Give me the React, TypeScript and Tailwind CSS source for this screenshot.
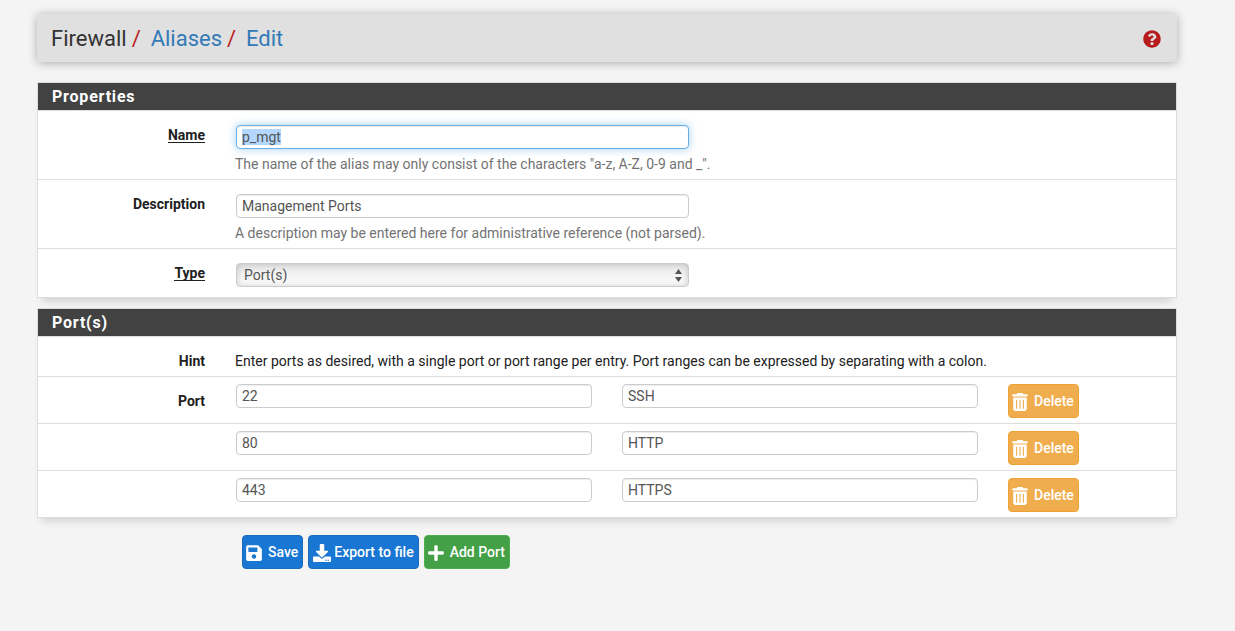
import React, { useEffect, useRef, useState } from 'react';
import { FaQuestionCircle, FaSave, FaDownload, FaPlus } from 'react-icons/fa';
import { FaTrashCan } from 'react-icons/fa6';

type PortEntry = {
	id: number;
	port: string;
	detail: string;
};

const initialPorts: PortEntry[] = [
	{ id: 1, port: '22', detail: 'SSH' },
	{ id: 2, port: '80', detail: 'HTTP' },
	{ id: 3, port: '443', detail: 'HTTPS' },
];

const inputClass =
	'block w-full h-6 rounded border border-[#ccc] bg-white px-[5px] text-sm text-[#555] shadow-[inset_0_1px_1px_rgba(0,0,0,0.075)] outline-none selection:bg-[#b3d7ff] selection:text-[#555] focus:border-[#66afe9] focus:shadow-[inset_0_1px_1px_rgba(0,0,0,0.075),0_0_8px_rgba(102,175,233,0.6)]';

const buttonClass = 'inline-flex h-[34px] items-center rounded border pr-1 pl-0.5 text-sm font-medium text-white';

function Panel({ title, children }: { title: string; children: React.ReactNode }) {
	return (
		<section className="mb-2.5 border border-[#ddd] bg-white shadow-[0_8px_8px_-5px_rgba(0,0,0,0.15)]">
			<h2 className="h-[27px] bg-[#424242] px-3.5 text-base leading-[27px] font-bold tracking-wider text-white">{title}</h2>
			<div className="divide-y divide-[#ddd] border-t border-[#ddd]">{children}</div>
		</section>
	);
}

// 12 column row, overhanging the panel by 10px on each side
function Row({ children, className }: { children: React.ReactNode; className: string }) {
	return (
		<div className={className}>
			<div className="-mx-2.5 grid grid-cols-12">{children}</div>
		</div>
	);
}

function Label({ text, htmlFor, required }: { text: string; htmlFor?: string; required?: boolean }) {
	return (
		<label htmlFor={htmlFor} className="col-span-2 pr-4 text-right text-sm leading-5 font-bold text-[#212121]">
			<span className={required ? 'inline-block border-b border-[#212121] leading-[14px]' : ''}>{text}</span>
		</label>
	);
}

export default function App() {
	const [ports, setPorts] = useState(initialPorts);
	const nameRef = useRef<HTMLInputElement>(null);

	useEffect(() => {
		nameRef.current?.focus();
		nameRef.current?.select();
	}, []);

	const updatePort = (id: number, change: Partial<PortEntry>) =>
		setPorts(ports.map((p) => (p.id === id ? { ...p, ...change } : p)));

	return (
		<div className="min-h-screen bg-[#f4f4f4] pt-3.5 pr-[58px] pb-10 pl-[37px] font-['Roboto',sans-serif] text-[#212121]">
			<header className="mb-5 flex h-12 items-center justify-between rounded-sm bg-[#e0e0e0] pt-0.5 pr-4 pl-3.5 shadow-[0_1px_10px_rgba(0,0,0,0.3)]">
				<nav aria-label="Breadcrumb">
					<ol className="flex items-center text-[22px] leading-6 text-[#333]">
						<li>Firewall</li>
						<li className="flex">
							<span className="w-6 pl-[5px] text-[#b71c1c]">/</span>
							<a href="#aliases" className="text-[#337ab7]">Aliases</a>
						</li>
						<li className="flex">
							<span className="w-6 pl-[5px] text-[#b71c1c]">/</span>
							<a href="#edit" className="text-[#337ab7]">Edit</a>
						</li>
					</ol>
				</nav>
				<a href="#help" aria-label="Help" className="text-[#b71c1c]"><FaQuestionCircle size={18} /></a>
			</header>

			<form onSubmit={(e) => e.preventDefault()}>
				<Panel title="Properties">
					<Row className="pt-3.5 pb-1">
						<Label text="Name" htmlFor="name" required />
						<div className="col-span-5 px-[15px]">
							<input id="name" ref={nameRef} type="text" defaultValue="p_mgt" className={inputClass} />
						</div>
						<p className="col-span-10 col-start-3 mt-1 px-3.5 text-sm leading-[22px] text-[#737373]">
							The name of the alias may only consist of the characters "a-z, A-Z, 0-9 and _".
						</p>
					</Row>
					<Row className="pt-3.5 pb-1">
						<Label text="Description" htmlFor="description" />
						<div className="col-span-5 px-[15px]">
							<input id="description" type="text" defaultValue="Management Ports" className={inputClass} />
						</div>
						<p className="col-span-10 col-start-3 mt-1 px-3.5 text-sm leading-[22px] text-[#737373]">
							A description may be entered here for administrative reference (not parsed).
						</p>
					</Row>
					<Row className="pt-3.5 pb-2.5">
						<Label text="Type" htmlFor="type" required />
						<div className="relative col-span-5 px-[15px]">
							<select
								id="type"
								className="block h-6 w-full appearance-none rounded border border-[#ccc] bg-linear-to-b from-[#e6e6e6] to-white px-[7px] text-sm text-[#555] shadow-[inset_0_0_6px_rgba(0,0,0,0.2)] outline-none"
							>
								<option>Port(s)</option>
								<option>Host(s)</option>
								<option>Network(s)</option>
							</select>
							<svg className="pointer-events-none absolute top-1.5 right-[22px]" width="7" height="13" viewBox="0 0 7 13" fill="#555">
								<path d="M3.5 0L7 5H0zM3.5 13L0 8h7z" />
							</svg>
						</div>
					</Row>
				</Panel>

				<Panel title="Port(s)">
					<Row className="pt-3.5 pb-[5px]">
						<Label text="Hint" />
						<p className="col-span-10 px-3.5 text-sm leading-5">
							Enter ports as desired, with a single port or port range per entry. Port ranges can be expressed by separating with a colon.
						</p>
					</Row>
					{ports.map((entry, i) => (
						<Row key={entry.id} className="pt-[7px] pb-[5px]">
							<div className="col-span-2 pt-[7px]">
								{i === 0 && <div className="grid grid-cols-2"><Label text="Port" htmlFor="port-1" /></div>}
							</div>
							<div className="col-span-4 px-[15px]">
								<input
									id={`port-${entry.id}`}
									aria-label={`Port ${i + 1}`}
									type="text"
									value={entry.port}
									onChange={(e) => updatePort(entry.id, { port: e.target.value })}
									className={inputClass}
								/>
							</div>
							<div className="col-span-4 px-[15px]">
								<input
									aria-label={`Description of port ${i + 1}`}
									type="text"
									value={entry.detail}
									onChange={(e) => updatePort(entry.id, { detail: e.target.value })}
									className={inputClass}
								/>
							</div>
							<div className="col-span-2 flex px-[15px]">
								<button
									type="button"
									onClick={() => setPorts(ports.filter((p) => p.id !== entry.id))}
									className={`${buttonClass} border-[#eea236] bg-[#f0ad4e]`}
								>
									<FaTrashCan size={18} className="mt-0.5 mr-[5px]" />
									Delete
								</button>
							</div>
						</Row>
					))}
				</Panel>

				<div className="mt-[17px] ml-[205px] flex gap-[5px]">
					<button type="submit" className={`${buttonClass} border-[#1c6bb8] bg-[#1976d2]`}>
						<FaSave size={18} className="mt-0.5 mr-[5px]" />
						Save
					</button>
					<button type="button" className={`${buttonClass} border-[#1c6bb8] bg-[#1976d2]`}>
						<FaDownload size={18} className="mt-0.5 mr-[3px] ml-0.5" />
						Export to file
					</button>
					<button
						type="button"
						onClick={() => setPorts([...ports, { id: Date.now(), port: '', detail: '' }])}
						className={`${buttonClass} border-[#4cae4c] bg-[#43a047]`}
					>
						<FaPlus size={18} className="mt-0.5 mr-[5px]" />
						Add Port
					</button>
				</div>
			</form>
		</div>
	);
}
